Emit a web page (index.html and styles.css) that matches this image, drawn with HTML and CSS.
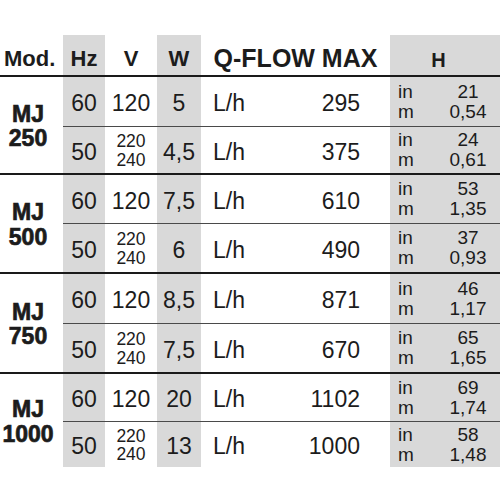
FILE: index.html
```html
<!DOCTYPE html>
<html lang="en">
<head>
<meta charset="utf-8">
<title>MJ specs</title>
<link rel="stylesheet" href="styles.css">
</head>
<body>
<div class="spec">
  <div class="hd mod">Mod.</div>
  <div class="hd g">Hz</div>
  <div class="hd">V</div>
  <div class="hd g">W</div>
  <div class="hd q">Q-FLOW MAX</div>
  <div class="hd g h">H</div>

  <div class="model top">MJ<br>250</div>
  <div class="c g top">60</div>
  <div class="c top">120</div>
  <div class="c g top">5</div>
  <div class="flow top"><span>L/h</span><span>295</span></div>
  <div class="hv g top"><span class="u">in<br>m</span><span class="v">21<br>0,54</span></div>
  <div class="c g sep">50</div>
  <div class="c volt sep">220<br>240</div>
  <div class="c g sep">4,5</div>
  <div class="flow sep"><span>L/h</span><span>375</span></div>
  <div class="hv g sep"><span class="u">in<br>m</span><span class="v">24<br>0,61</span></div>

  <div class="model top">MJ<br>500</div>
  <div class="c g top">60</div>
  <div class="c top">120</div>
  <div class="c g top">7,5</div>
  <div class="flow top"><span>L/h</span><span>610</span></div>
  <div class="hv g top"><span class="u">in<br>m</span><span class="v">53<br>1,35</span></div>
  <div class="c g sep">50</div>
  <div class="c volt sep">220<br>240</div>
  <div class="c g sep">6</div>
  <div class="flow sep"><span>L/h</span><span>490</span></div>
  <div class="hv g sep"><span class="u">in<br>m</span><span class="v">37<br>0,93</span></div>

  <div class="model top">MJ<br>750</div>
  <div class="c g top">60</div>
  <div class="c top">120</div>
  <div class="c g top">8,5</div>
  <div class="flow top"><span>L/h</span><span>871</span></div>
  <div class="hv g top"><span class="u">in<br>m</span><span class="v">46<br>1,17</span></div>
  <div class="c g sep">50</div>
  <div class="c volt sep">220<br>240</div>
  <div class="c g sep">7,5</div>
  <div class="flow sep"><span>L/h</span><span>670</span></div>
  <div class="hv g sep"><span class="u">in<br>m</span><span class="v">65<br>1,65</span></div>

  <div class="model top">MJ<br>1000</div>
  <div class="c g top">60</div>
  <div class="c top">120</div>
  <div class="c g top">20</div>
  <div class="flow top"><span>L/h</span><span>1102</span></div>
  <div class="hv g top"><span class="u">in<br>m</span><span class="v">69<br>1,74</span></div>
  <div class="c g sep">50</div>
  <div class="c volt sep">220<br>240</div>
  <div class="c g sep">13</div>
  <div class="flow sep"><span>L/h</span><span>1000</span></div>
  <div class="hv g sep"><span class="u">in<br>m</span><span class="v">58<br>1,48</span></div>
</div>
</body>
</html>
```

FILE: styles.css
```css
html, body {
  margin: 0;
  padding: 0;
  background: #ffffff;
}

body {
  font-family: "Liberation Sans", Arial, Helvetica, sans-serif;
  color: #1c1c1c;
}

.spec {
  margin-top: 35px;
  width: 500px;
  display: grid;
  grid-template-columns: 63px 42px 52px 44px 189px 110px;
  grid-template-rows: 40px 51px 47px 50px 49px 51px 49px 49px 46px;
}

.spec > div {
  box-sizing: border-box;
}

.g {
  background: #d9d9d9;
}

.hd {
  display: flex;
  align-items: flex-end;
  justify-content: center;
  padding-bottom: 5px;
  font-size: 22px;
  font-weight: bold;
  line-height: 1;
}

.hd.mod {
  justify-content: flex-start;
  padding-left: 4px;
}

.hd.q {
  font-size: 25px;
  padding-bottom: 4px;
}

.hd.h {
  font-size: 20px;
  padding-right: 13px;
}

.top {
  border-top: 2px solid #1a1a1a;
}

.sep {
  border-top: 1px solid #4a4a4a;
}

.model {
  grid-row: span 2;
  display: flex;
  align-items: center;
  justify-content: center;
  text-align: center;
  padding: 2px 7px 0 0;
  font-size: 23px;
  line-height: 24.5px;
  font-weight: bold;
  -webkit-text-stroke: 0.7px #1c1c1c;
}

.c {
  display: flex;
  align-items: center;
  justify-content: center;
  text-align: center;
  padding-top: 4px;
  font-size: 23px;
  line-height: 1;
}

.c.volt {
  padding-top: 1px;
  font-size: 17.5px;
  line-height: 18.5px;
}

.flow {
  display: flex;
  align-items: center;
  justify-content: space-between;
  padding: 4px 30px 0 12px;
  font-size: 23px;
  line-height: 1;
}

.hv {
  display: flex;
  align-items: center;
  padding-left: 8px;
  font-size: 19px;
  line-height: 20px;
}

.hv .u {
  width: 38px;
}

.hv .v {
  flex: 1;
  text-align: center;
}
```
